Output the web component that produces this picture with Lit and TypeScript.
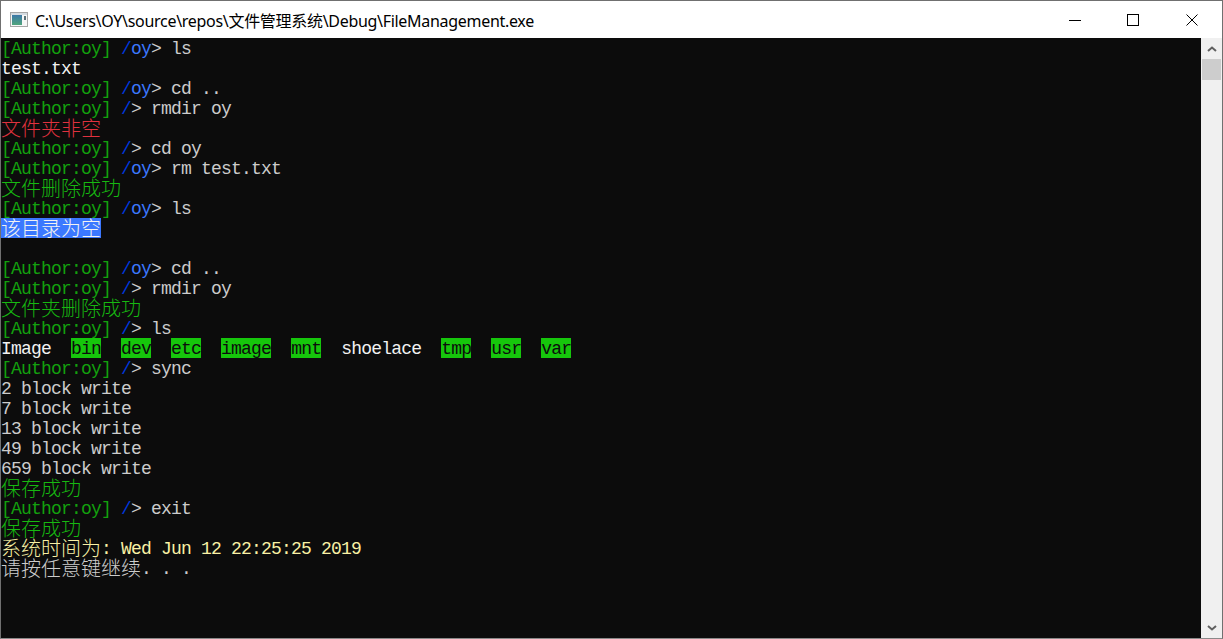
import { LitElement, html, css } from "lit";
import { customElement } from "lit/decorators.js";

type Seg = [string, string];
const prompt = (dir: string, cmd: string): Seg[] => dir === "oy"
  ? [["g", "[Author:oy] "], ["d", "/"], ["b", "oy"], ["w", "> " + cmd]]
  : [["g", "[Author:oy] "], ["d", "/"], ["w", "> " + cmd]];

const lines: Seg[][] = [
  prompt("oy", "ls"),
  [["t", "test.txt"]],
  prompt("oy", "cd .."),
  prompt("", "rmdir oy"),
  [["r cjk", "文件夹非空"]],
  prompt("", "cd oy"),
  prompt("oy", "rm test.txt"),
  [["g cjk", "文件删除成功"]],
  prompt("oy", "ls"),
  [["sel cjk", "该目录为空"]],
  [],
  prompt("oy", "cd .."),
  prompt("", "rmdir oy"),
  [["g cjk", "文件夹删除成功"]],
  prompt("", "ls"),
  [["t", "Image  "], ["hl", "bin"], ["w", "  "], ["hl", "dev"], ["w", "  "], ["hl", "etc"], ["w", "  "], ["hl", "image"], ["w", "  "], ["hl", "mnt"], ["t", "  shoelace  "], ["hl", "tmp"], ["w", "  "], ["hl", "usr"], ["w", "  "], ["hl", "var"]],
  prompt("", "sync"),
  [["w", "2 block write"]],
  [["w", "7 block write"]],
  [["w", "13 block write"]],
  [["w", "49 block write"]],
  [["w", "659 block write"]],
  [["g cjk", "保存成功"]],
  prompt("", "exit"),
  [["g cjk", "保存成功"]],
  [["y cjk", "系统时间为"], ["y", ": Wed Jun 12 22:25:25 2019"]],
  [["w cjk", "请按任意键继续"], ["w", ". . ."]],
];

@customElement("app-root")
export class AppRoot extends LitElement {
  static styles = css`
    :host { display: block; width: 1223px; height: 639px; overflow: hidden; }
    .win { box-sizing: border-box; height: 639px; display: flex; flex-direction: column; border: 1px solid #707070; border-bottom-color: #8a8a8a; background: #fff; }
    .title { flex: none; height: 37px; display: flex; align-items: center; background: #fff; }
    .app-icon { flex: none; margin: 0 7px 0 9px; }
    .caption { flex: 1; font: 16px "Noto Sans", "Open Sans", "Noto Sans CJK SC", sans-serif; color: #000; white-space: nowrap; letter-spacing: -0.3px; }
    .btns { display: flex; height: 37px; }
    .btn { width: 58px; display: flex; align-items: center; justify-content: center; }
    .btn.close { width: 60px; }
    .body { flex: 1; min-height: 0; display: flex; }
    .term { flex: 1; min-width: 0; background: #0c0c0c; overflow: hidden; }
    .line { height: 20px; line-height: 23px; white-space: pre; font-family: "Liberation Mono", monospace; font-size: 18px; letter-spacing: -0.8px; color: #cccccc; }
    .line span { display: inline-block; height: 20px; vertical-align: top; }
    .line .cjk { font-family: "Noto Sans CJK SC", sans-serif; font-size: 20px; font-weight: 300; letter-spacing: 0; line-height: 19px; }
    .g { color: #13a10e; }
    .line .g.cjk { color: #17b811; }
    .d { color: #0037da; }
    .b { color: #3b78ff; }
    .w { color: #cccccc; }
    .t { color: #f2f2f2; }
    .r { color: #e0323f; }
    .y { color: #f9f1a5; }
    .sel { background: #3b78ff; color: #f2f2f2; }
    .hl { background: #16c60c; color: #0c0c0c; }
    .sb { flex: none; width: 21px; background: #f0f0f0; display: flex; flex-direction: column; }
    .arrow { flex: none; height: 21px; display: flex; align-items: center; justify-content: center; }
    .thumb { flex: none; height: 21px; margin: 0 1px; background: #cdcdcd; }
    .track { flex: 1; }
  `;

  render() {
    return html`<div class="win">
      <div class="title">
        <svg class="app-icon" width="18" height="15" viewBox="0 0 18 15">
          <defs><linearGradient id="ig" x1="0" y1="0" x2="0" y2="1"><stop offset="0" stop-color="#3c78a8"/><stop offset="1" stop-color="#4fa57c"/></linearGradient></defs>
          <rect x="0.5" y="0.5" width="17" height="14" fill="#f6f6f6" stroke="#a6a6a6"/>
          <rect x="1" y="1" width="16" height="2" fill="#d4dbe1"/>
          <rect x="2" y="3" width="10" height="10" fill="url(#ig)"/>
          <rect x="14" y="4" width="2" height="4" fill="#5a7078"/>
        </svg>
        <div class="caption">C:\\Users\\OY\\source\\repos\\文件管理系统\\Debug\\FileManagement.exe</div>
        <div class="btns">
          <div class="btn"><svg width="12" height="12" viewBox="0 0 12 12"><path d="M0 6.5H12" stroke="#000"/></svg></div>
          <div class="btn"><svg width="12" height="12" viewBox="0 0 12 12"><rect x="0.5" y="0.5" width="11" height="11" fill="none" stroke="#000"/></svg></div>
          <div class="btn close"><svg width="12" height="12" viewBox="0 0 12 12"><path d="M0.5 0.5L11.5 11.5M11.5 0.5L0.5 11.5" stroke="#000" fill="none"/></svg></div>
        </div>
      </div>
      <div class="body">
        <div class="term">
          ${lines.map((l) => html`<div class="line">${l.map(([c, s]) => html`<span class=${c}>${s}</span>`)}</div>`)}
        </div>
        <div class="sb">
          <div class="arrow"><svg width="10" height="6" viewBox="0 0 10 6"><path d="M1 5L5 1.5L9 5" fill="none" stroke="#606060" stroke-width="2"/></svg></div>
          <div class="thumb"></div>
          <div class="track"></div>
          <div class="arrow"><svg width="10" height="6" viewBox="0 0 10 6"><path d="M1 1L5 4.5L9 1" fill="none" stroke="#606060" stroke-width="2"/></svg></div>
        </div>
      </div>
    </div>`;
  }
}
